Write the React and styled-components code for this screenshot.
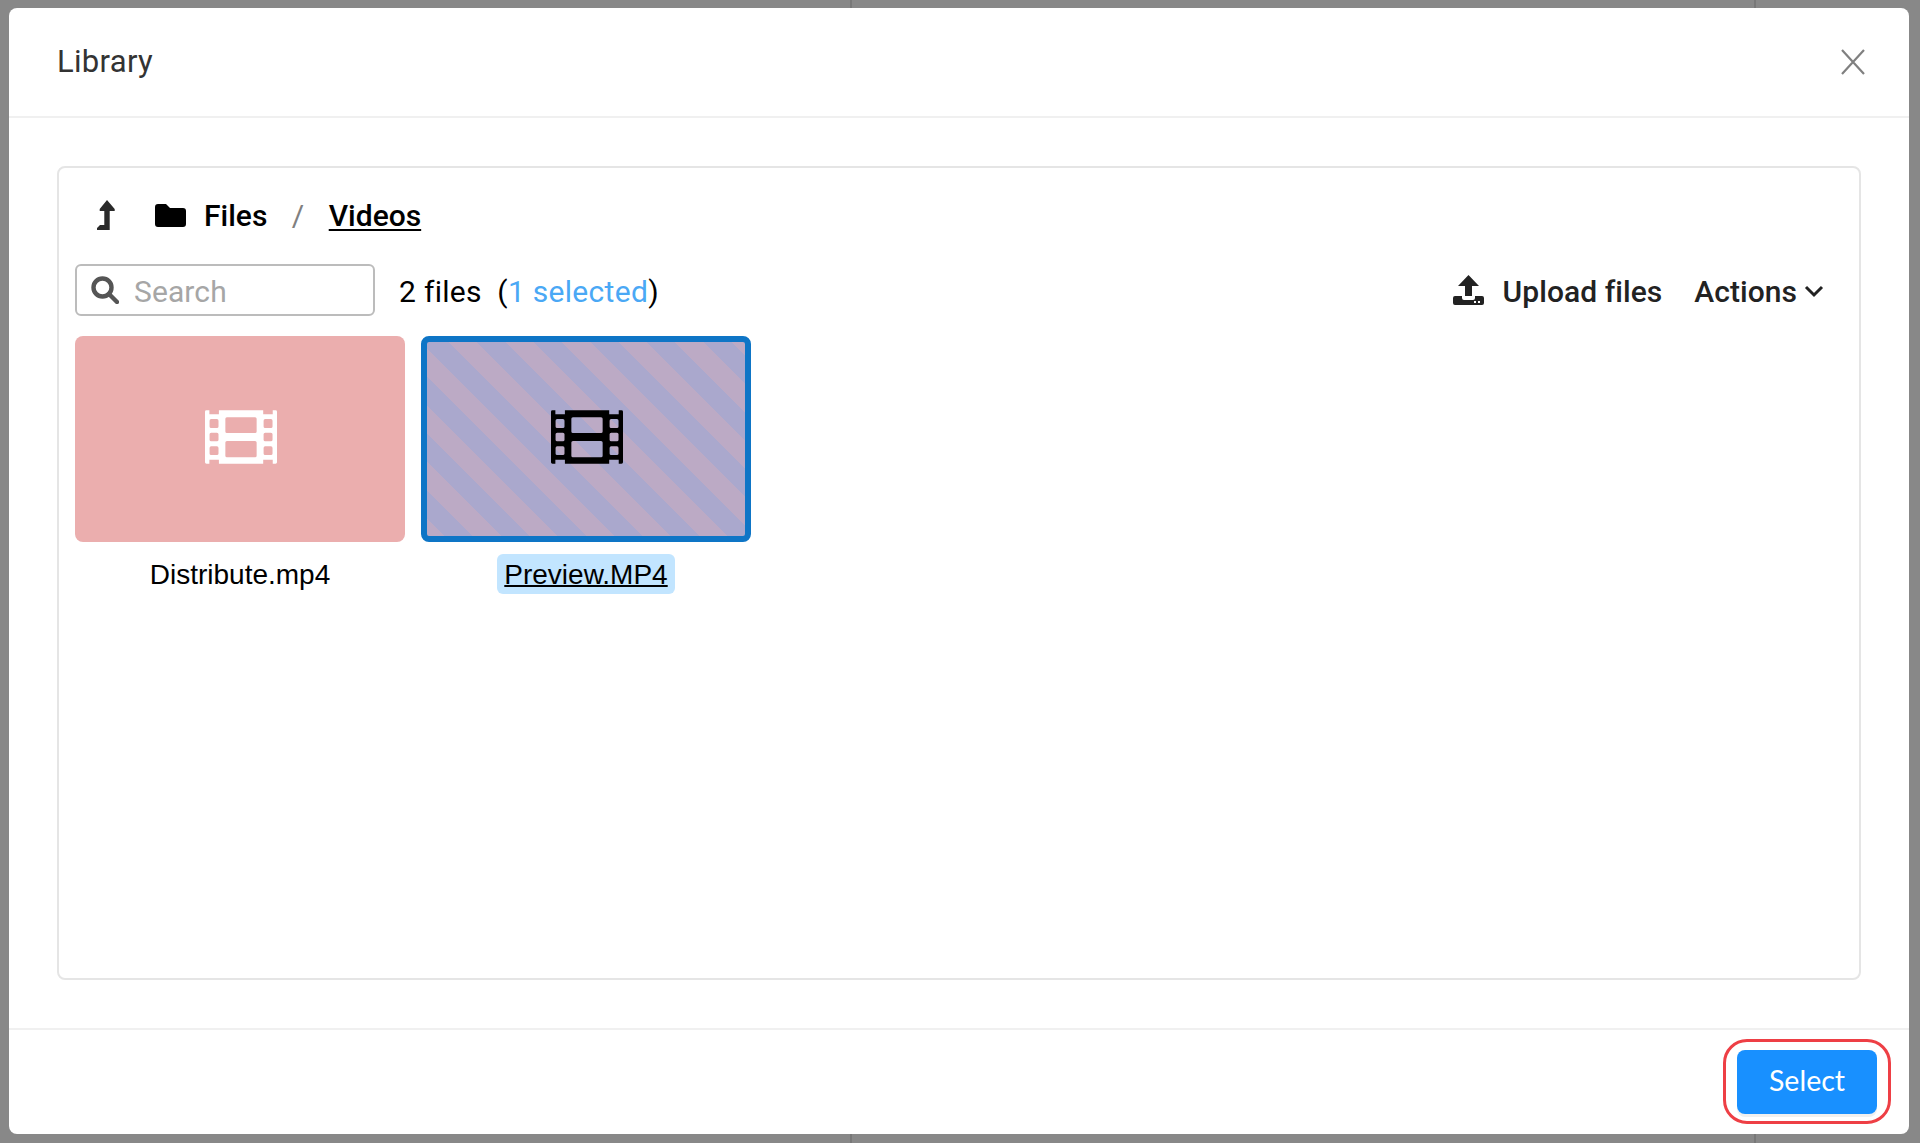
import React from 'react';
import styled, {createGlobalStyle} from 'styled-components';

const GlobalStyle = createGlobalStyle`
  html, body {
    margin: 0;
    padding: 0;
    background: #888888;
  }
  body {
    font-family: Roboto, "Liberation Sans", sans-serif;
    color: #000;
  }
`

const Page = styled.div`
  width: 1920px;
  height: 1143px;
  box-sizing: border-box;
  padding: 8px 11px 9px 9px;
  background: #888888;
  position: relative;
  overflow: hidden;
`

const BackdropTick = styled.div`
  position: absolute;
  left: ${p => p.$x}px;
  ${p => (p.$bottom ? 'bottom: 0; height: 9px;' : 'top: 0; height: 8px;')}
  width: 2px;
  background: #787878;
`

const Modal = styled.div`
  width: 100%;
  height: 100%;
  background: #fff;
  border-radius: 8px;
  display: flex;
  flex-direction: column;
  position: relative;
`

const Header = styled.header`
  height: 108px;
  flex: none;
  display: flex;
  align-items: center;
  justify-content: space-between;
  padding: 0 44px 0 48px;
  border-bottom: 2px solid #f0f0f0;
`

const Title = styled.h1`
  margin: 0 0 1px;
  font-size: 31px;
  font-weight: 400;
  letter-spacing: 0.3px;
  color: #333;
`

const Body = styled.main`
  flex: 1;
  min-height: 0;
  padding: 48px 48px 48px;
  display: flex;
`

const Panel = styled.section`
  flex: 1;
  border: 2px solid #e5e5e5;
  border-radius: 8px;
  padding: 0 16px;
`

const Breadcrumb = styled.nav`
  height: 96px;
  box-sizing: border-box;
  display: flex;
  align-items: center;
  padding: 0 0 2px 22px;
  font-size: 30px;
  font-weight: 500;
`

const Crumb = styled.span`
  text-decoration: ${p => (p.$current ? 'underline' : 'none')};
  text-decoration-thickness: 2px;
  text-underline-offset: 3px;
`

const Separator = styled.span`
  margin: 0 24.5px;
  color: #808080;
  font-weight: 400;
`

const Toolbar = styled.div`
  height: 52px;
  display: flex;
  align-items: center;
  font-size: 30px;
`

const SearchBox = styled.div`
  width: 300px;
  height: 52px;
  box-sizing: border-box;
  border: 2px solid #bcbcbc;
  border-radius: 6px;
  display: flex;
  align-items: center;
  padding: 2px 0 0 14px;
  gap: 15px;
  color: #a6a6a6;
  flex: none;
  letter-spacing: 0.1px;
`

const FileCount = styled.div`
  margin-left: 24px;
  padding-top: 2px;
  letter-spacing: 0.3px;
`

const SelectedCount = styled.span`
  color: #4aa8f5;
`

const Actions = styled.div`
  margin-left: auto;
  padding: 2px 19px 0 0;
  display: flex;
  align-items: center;
  font-weight: 500;
  color: #222;
  letter-spacing: 0.05px;
`

const ActionItem = styled.span`
  display: flex;
  align-items: center;
  margin-left: ${p => p.$gap || 0}px;
`

const Grid = styled.div`
  display: flex;
  gap: 16px;
  margin-top: 20px;
`

const FileCard = styled.div`
  width: 330px;
  display: flex;
  flex-direction: column;
  align-items: center;
`

const Thumb = styled.div`
  width: 100%;
  height: 206px;
  box-sizing: border-box;
  border-radius: 8px;
  display: flex;
  align-items: center;
  justify-content: center;
  padding: 0 0 4px 2px;
  background: #ebaeae;
  color: #fff;
  ${p => p.$selected && `
    border: 6px solid #0e75c6;
    color: #000;
    background: repeating-linear-gradient(45deg, #bcaac5 0 12.5px, #aaa8cd 12.5px 32.5px, #bcaac5 32.5px 40px);
  `}
`

const FileName = styled.div`
  margin-top: 12px;
  height: 40px;
  line-height: 42px;
  padding: 0 7px;
  border-radius: 6px;
  font-family: "Liberation Sans", Arial, sans-serif;
  font-size: 28px;
  background: ${p => (p.$selected ? '#c2e5ff' : 'transparent')};
  text-decoration: ${p => (p.$selected ? 'underline' : 'none')};
  text-decoration-thickness: 2px;
`

const Footer = styled.footer`
  height: 106px;
  flex: none;
  box-sizing: border-box;
  border-top: 2px solid #f0f0f0;
  display: flex;
  justify-content: flex-end;
  padding: 20px 32px 0 0;
`

const SelectButton = styled.button`
  width: 140px;
  height: 64px;
  border: 0;
  border-radius: 8px;
  padding: 0 0 4px;
  background: #1890ff;
  box-shadow: 0 3px 0 #f0f0f0;
  color: #fff;
  font-family: Lato, Roboto, sans-serif;
  font-size: 28.5px;
  position: relative;
  &::after {
    content: "";
    position: absolute;
    inset: -11px -14px -10px;
    border: 3px solid #ee3f45;
    border-radius: 24px;
  }
`

const CloseButton = () => (
  <svg width="24" height="26" viewBox="0 0 24 26" fill="none" stroke="#808080" strokeWidth="2.2">
    <path d="M1 1 L23 25 M23 1 L1 25" />
  </svg>
)

const UpIcon = () => (
  <svg width="18" height="30" viewBox="0 0 18 30" fill="#2a2a2a" style={{marginRight: 40}}>
    <path d="M10 0 L17.7 9 V11 H12.7 V30 H0 V28 L3 25 H7.3 V11 H2.7 V9 Z" />
  </svg>
)

const FolderIcon = () => (
  <svg width="31" height="23" viewBox="0 0 31 23" fill="#000" style={{marginRight: 18}}>
    <path d="M3 0 H11 L15 4 H28 Q31 4 31 7 V20 Q31 23 28 23 H3 Q0 23 0 20 V3 Q0 0 3 0 Z" />
  </svg>
)

const SearchIcon = () => (
  <svg width="28" height="28" viewBox="0 0 28 28" fill="none" stroke="#555" strokeWidth="4.4" style={{marginTop: -3}}>
    <circle cx="11.5" cy="11.5" r="9" />
    <path d="M18 18 L26 26" strokeLinecap="round" />
  </svg>
)

const UploadIcon = () => (
  <svg width="31" height="30" viewBox="0 0 31 30" fill="#222" style={{marginRight: 19, marginTop: -2}}>
    <path d="M15.5 0 L26 11 H19 V21 H12 V11 H5 Z" />
    <path fillRule="evenodd" d="M2 21 H9 V23 Q9 25 11 25 H20 Q22 25 22 23 V21 H29 Q31 21 31 23 V28 Q31 30 29 30 H2 Q0 30 0 28 V23 Q0 21 2 21 Z M21 26 H23 V28 H21 Z M25 26 H27 V28 H25 Z" />
  </svg>
)

const Chevron = () => (
  <svg width="20" height="14" viewBox="0 0 20 14" fill="none" stroke="#222" strokeWidth="3" style={{marginLeft: 7}}>
    <path d="M2 3 L10 11 L18 3" />
  </svg>
)

// hole in the film shape, with soft corners
const hole = (x, y, w, h, r = 1.6) =>
  `M${x + r} ${y} H${x + w - r} Q${x + w} ${y} ${x + w} ${y + r} V${y + h - r} Q${x + w} ${y + h} ${x + w - r} ${y + h} H${x + r} Q${x} ${y + h} ${x} ${y + h - r} V${y + r} Q${x} ${y} ${x + r} ${y} Z`

const filmOutline = 'M1.5 0 H4.4 V4 H14 V0 H58.6 V4 H68.2 V0 H71 Q72.5 0 72.5 1.5 V52.5 Q72.5 54 71 54 H68.2 V50 H58.6 V54 H14 V50 H4.4 V54 H1.5 Q0 54 0 52.5 V1.5 Q0 0 1.5 0 Z'

const filmHoles = [
  hole(4.6, 9, 9, 9),
  hole(4.6, 22.6, 9, 8.8),
  hole(4.6, 36.4, 9, 8.8),
  hole(59, 9, 9, 9),
  hole(59, 22.6, 9, 8.8),
  hole(59, 36.4, 9, 8.8),
  hole(20.5, 7, 31.5, 16),
  hole(20.5, 31, 31.5, 16.5),
].join(' ')

const FilmIcon = () => (
  <svg width="72" height="54" viewBox="0 0 72.5 54" fill="currentColor">
    <path fillRule="evenodd" d={`${filmOutline} ${filmHoles}`} />
  </svg>
)

const files = [
  {name: 'Distribute.mp4', selected: false},
  {name: 'Preview.MP4', selected: true},
]

const App = () => {
  return (
    <Page>
      <GlobalStyle />
      <BackdropTick $x={850} />
      <BackdropTick $x={1754} />
      <BackdropTick $x={850} $bottom />
      <BackdropTick $x={1754} $bottom />
      <Modal>
        <Header>
          <Title>Library</Title>
          <CloseButton />
        </Header>
        <Body>
          <Panel>
            <Breadcrumb>
              <UpIcon />
              <FolderIcon />
              <Crumb>Files</Crumb>
              <Separator>/</Separator>
              <Crumb $current>Videos</Crumb>
            </Breadcrumb>
            <Toolbar>
              <SearchBox>
                <SearchIcon />
                Search
              </SearchBox>
              <FileCount>
                2 files&nbsp;&nbsp;(<SelectedCount>1 selected</SelectedCount>)
              </FileCount>
              <Actions>
                <ActionItem>
                  <UploadIcon />
                  Upload files
                </ActionItem>
                <ActionItem $gap={32}>
                  Actions
                  <Chevron />
                </ActionItem>
              </Actions>
            </Toolbar>
            <Grid>
              {files.map(file => (
                <FileCard key={file.name}>
                  <Thumb $selected={file.selected}>
                    <FilmIcon />
                  </Thumb>
                  <FileName $selected={file.selected}>{file.name}</FileName>
                </FileCard>
              ))}
            </Grid>
          </Panel>
        </Body>
        <Footer>
          <SelectButton>Select</SelectButton>
        </Footer>
      </Modal>
    </Page>
  )
}

export default App
